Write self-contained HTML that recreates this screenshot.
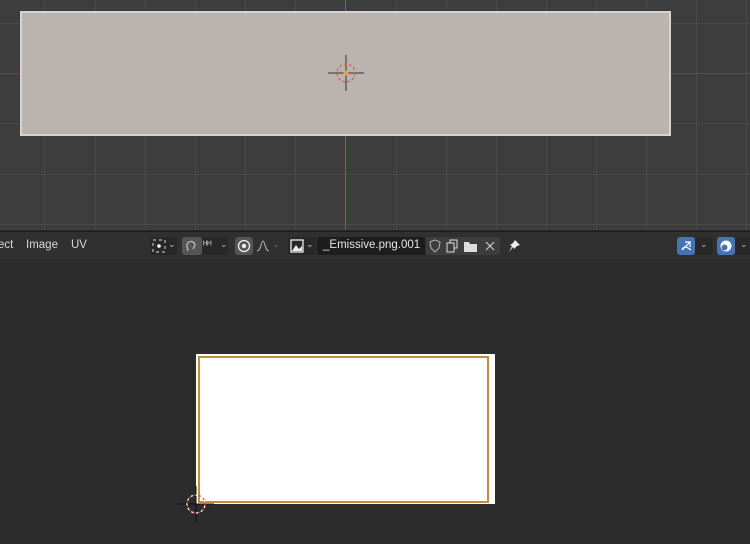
<!DOCTYPE html>
<html><head><meta charset="utf-8"><style>
*{margin:0;padding:0;box-sizing:border-box}
body{width:750px;height:544px;overflow:hidden;background:#2c2c2c;font-family:"Liberation Sans",sans-serif;position:relative}
.top{position:absolute;left:0;top:0;width:750px;height:230px;background:#3d3d3d;overflow:hidden}
.vl{position:absolute;top:0;width:1px;height:230px;background:#4a4a4a}
.hl{position:absolute;left:0;height:1px;width:750px;background:#4a4a4a}
.hdr{position:absolute;left:0;top:231px;width:750px;height:28px;background:#303030;border-top:1px solid #1d1d1d;color:#d8d8d8;font-size:11.5px}
.hdr span.t{position:absolute;top:7px}
.btn{position:absolute;top:5px;height:18px;border-radius:3px}
.cv{position:absolute;top:7px;font-size:9px;color:#bbb}
</style></head><body>
<div class="top">
<div class="vl" style="left:44px"></div><div class="vl" style="left:95px"></div><div class="vl" style="left:145px"></div><div class="vl" style="left:195px"></div><div class="vl" style="left:245px"></div><div class="vl" style="left:295px"></div><div class="vl" style="left:396px"></div><div class="vl" style="left:446px"></div><div class="vl" style="left:496px"></div><div class="vl" style="left:546px"></div><div class="vl" style="left:596px"></div><div class="vl" style="left:646px"></div><div class="vl" style="left:696px"></div><div class="vl" style="left:746px"></div>
<div class="hl" style="top:23px"></div><div class="hl" style="top:123px"></div><div class="hl" style="top:174px"></div><div class="hl" style="top:224px"></div>
<div class="hl" style="top:73px;background:#7a3e44"></div>
<div class="vl" style="left:345px;background:#4a6ca8"></div>
<div style="position:absolute;left:20px;top:11px;width:651px;height:125px;background:#bbb3ad;border:2px solid #d6d3d0"></div>
<svg style="position:absolute;left:326px;top:53px" width="40" height="40"><line x1="20" y1="2" x2="20" y2="38" stroke="#333" stroke-width="1"/><line x1="2" y1="20" x2="38" y2="20" stroke="#333"/><circle cx="20" cy="20" r="9" fill="none" stroke="#c66" stroke-dasharray="3 2" stroke-width="1.3"/><circle cx="20" cy="20" r="2.5" fill="#e8a050"/></svg>
</div>
<div class="hdr">
<span class="t" style="left:-2px">ect</span><span class="t" style="left:26px">Image</span><span class="t" style="left:71px">UV</span>
<div class="btn" style="left:150px;width:27px;background:#282828"></div>
<svg style="position:absolute;left:152px;top:7px" width="14" height="14"><rect x="1" y="1" width="12" height="12" fill="none" stroke="#ddd" stroke-dasharray="3 3"/><circle cx="7" cy="7" r="1.8" fill="#fff"/></svg><span class="cv" style="left:168px">⌄</span>
<div class="btn" style="left:182px;width:20px;background:#555"></div>
<svg style="position:absolute;left:184px;top:7px" width="16" height="14"><path d="M4 12 L3 7 A4 4 0 0 1 11 6 L9 10" fill="none" stroke="#bbb" stroke-width="1.3"/></svg>
<div class="btn" style="left:202px;width:26px;background:#282828"></div>
<span style="position:absolute;left:203px;top:8px;color:#ccc;font-size:10px">ᴴᴴ</span><span class="cv" style="left:220px">⌄</span>
<div class="btn" style="left:235px;width:18px;background:#555"></div>
<svg style="position:absolute;left:237px;top:7px" width="14" height="14"><circle cx="7" cy="7" r="5.5" fill="none" stroke="#eee" stroke-width="1.3"/><circle cx="7" cy="7" r="2.2" fill="#eee"/></svg>
<svg style="position:absolute;left:256px;top:8px" width="14" height="12"><path d="M1 11 C5 11 5 1 7 1 C9 1 9 11 13 11" fill="none" stroke="#aaa" stroke-width="1.1"/></svg><span class="cv" style="left:272px;color:#666">⌄</span>
<div class="btn" style="left:288px;width:28px;background:#282828"></div>
<svg style="position:absolute;left:290px;top:7px" width="14" height="14"><rect x="1" y="1" width="12" height="12" fill="none" stroke="#eee" stroke-width="1.3"/><path d="M2 12 L6 6 L9 10 L12 7 L12 12Z" fill="#eee"/></svg><span class="cv" style="left:306px">⌄</span>
<div class="btn" style="left:317px;width:108px;background:#1d1d1d;border-radius:3px 0 0 3px"></div>
<span class="t" style="left:323px;color:#e6e6e6">_Emissive.png.001</span>
<div class="btn" style="left:426px;width:74px;background:#3d3d3d;border-radius:0 3px 3px 0"></div>
<svg style="position:absolute;left:428px;top:7px" width="70" height="14"><path d="M7 1 L12 3 L11 9 L7 13 L3 9 L2 3Z" fill="none" stroke="#aaa" stroke-width="1.1"/><rect x="19" y="4" width="7" height="9" fill="none" stroke="#ddd"/><path d="M22 4 V1 H29 V9 H26" fill="none" stroke="#ddd"/><path d="M36 3 H41 L42 5 H49 V13 H36Z" fill="#ddd"/><path d="M58 3 L66 11 M66 3 L58 11" stroke="#ccc" stroke-width="1.2"/></svg>
<svg style="position:absolute;left:507px;top:7px" width="14" height="14"><path d="M8 1 L13 6 L10 7 L7 10 L6 8 L2 13 L5 7 L3 6 L6 4Z" fill="#eee"/></svg>
<div class="btn" style="left:677px;width:18px;background:#4772b3"></div>
<svg style="position:absolute;left:679px;top:7px" width="14" height="14"><path d="M3 11 L11 3 M6 3 H11 V8 M3 11 C5 6 8 8 12 11" fill="none" stroke="#fff" stroke-width="1.2"/></svg>
<div class="btn" style="left:695px;width:18px;background:#282828"></div><span class="cv" style="left:700px">⌄</span>
<div class="btn" style="left:717px;width:18px;background:#4772b3"></div>
<svg style="position:absolute;left:719px;top:7px" width="14" height="14"><circle cx="7" cy="7" r="5.5" fill="#fff"/><circle cx="5.5" cy="8.5" r="3" fill="#4772b3"/></svg>
<div class="btn" style="left:735px;width:18px;background:#282828"></div><span class="cv" style="left:740px">⌄</span>
</div>
<div style="position:absolute;left:196px;top:354px;width:299px;height:150px;background:#fff"></div>
<div style="position:absolute;left:198px;top:356px;width:291px;height:147px;border:2px solid #c48a45"></div>
<svg style="position:absolute;left:176px;top:484px" width="40" height="40"><line x1="20" y1="2" x2="20" y2="38" stroke="#111"/><line x1="2" y1="20" x2="38" y2="20" stroke="#111"/><circle cx="20" cy="20" r="9" fill="none" stroke="#c44" stroke-dasharray="3 2" stroke-width="1.3"/><circle cx="20" cy="20" r="9" fill="none" stroke="#fff" stroke-dasharray="2 3" stroke-dashoffset="3" stroke-width="1.3"/></svg>
</body></html>
